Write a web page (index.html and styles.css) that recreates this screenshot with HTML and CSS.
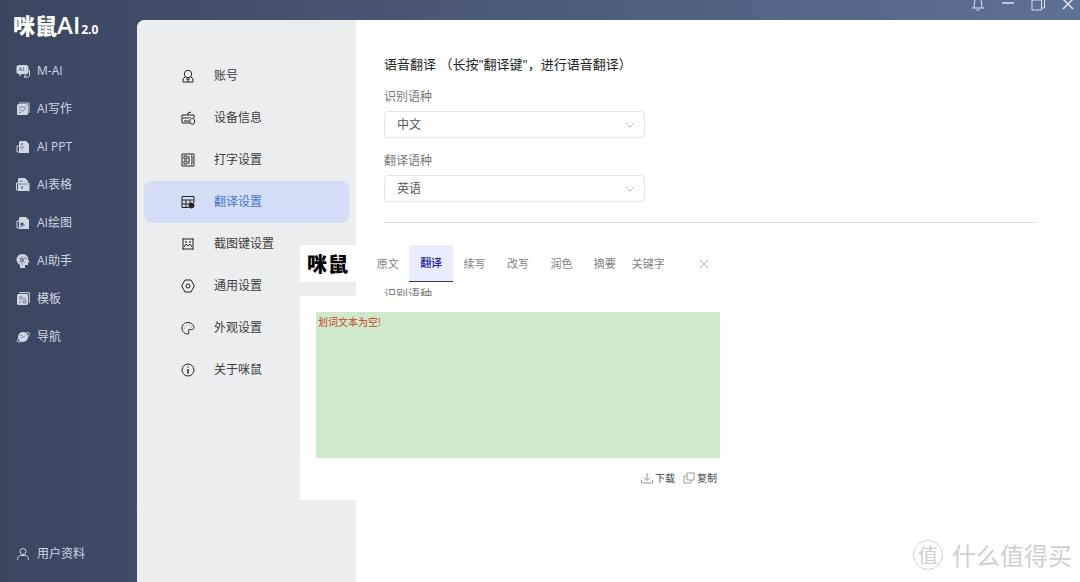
FILE: index.html
```html
<!DOCTYPE html>
<html lang="zh-CN">
<head>
<meta charset="utf-8">
<meta name="viewport" content="width=device-width, initial-scale=1">
<title>咪鼠AI 2.0</title>
<link rel="stylesheet" href="styles.css">
</head>
<body>
<div class="app">
  <aside class="sidebar">
    <h1 class="brand"><span class="brand-name">咪鼠</span><span class="brand-ai">AI</span><span class="brand-version">2.0</span></h1>
    <nav class="main-nav">
      <a class="nav-item" href="#"><svg class="nav-icon" viewBox="0 0 14 14"><path fill="currentColor" d="M3 1h7a2.500 2.500 0 0 1 2.500 2.500v4A2.500 2.500 0 0 1 10 10H6l-2.500 2.500V10H3A2.500 2.500 0 0 1 .5 7.500v-4A2.500 2.500 0 0 1 3 1z"/><path class="ink" d="M3 7l1.500-4L6 7M7.500 3v4M3.500 5.500h2"/><path class="line" d="M13.500 6v5.500a2 2 0 0 1-2 1.500H8l2-3"/></svg>M-AI</a>
      <a class="nav-item" href="#"><svg class="nav-icon" viewBox="0 0 14 14"><path class="line" d="M3 1h10v10"/><rect x="1" y="2" width="11" height="11" rx="1.500" fill="currentColor"/><path class="ink" d="M3 5h7M3 8h3M3 10.500h2M6 10l4-4"/></svg>AI写作</a>
      <a class="nav-item" href="#"><svg class="nav-icon" viewBox="0 0 14 14"><path fill="currentColor" d="M4 1h6l3 3v9H3V2z"/><path class="line" d="M3 6H1v6h2"/><path class="ink" d="M5 5l1-2 1 2M4 7h4M5 10l2-2"/></svg>AI PPT</a>
      <a class="nav-item" href="#"><svg class="nav-icon" viewBox="0 0 14 14"><path fill="currentColor" d="M3 0h6l3 3v2h1.500v8H2V1z"/><path class="line" d="M3 5H.5v7H3"/><path class="ink" d="M4 4l1-2 1 2M1 6h11M5 8l2 3m0-3l-2 3"/></svg>AI表格</a>
      <a class="nav-item" href="#"><svg class="nav-icon" viewBox="0 0 14 14"><path fill="currentColor" d="M4 1h6l3 3v9H3V2z"/><path class="line" d="M3 5H1v7h2"/><circle cx="6" cy="8" r="1.600" fill="#3c4860"/><path class="ink" d="M4 11l5-2"/></svg>AI绘图</a>
      <a class="nav-item" href="#"><svg class="nav-icon" viewBox="0 0 14 14"><path fill="currentColor" d="M6 0c4 0 6 2 6 5l1.500 3-1.500.5V11H9v3H4v-3C2 10 .5 8 .5 5.500S3 0 6 0z"/><path class="ink" d="M6 2v3L3 4M6 6L3 8M6 6l4-3M6 6l3 3M6 6v5M9 5h2"/><circle cx="6" cy="6" r="1.500" class="ink"/></svg>AI助手</a>
      <a class="nav-item" href="#"><svg class="nav-icon" viewBox="0 0 14 14"><path class="line" d="M3 .7h10.300V11"/><rect x="1" y="2" width="11" height="11" rx="1.500" fill="currentColor"/><path class="ink" d="M3 5h4M3 7h7M3 10h2M7 9h3v2H7z"/></svg>模板</a>
      <a class="nav-item" href="#"><svg class="nav-icon" viewBox="0 0 14 14"><circle cx="7" cy="7" r="5" fill="currentColor"/><path class="line" d="M10 3c3-1 4 0 3 2-1 3-7 7-10 7-3 0-2-2 0-4"/><path class="ink" d="M4 6l2-1M5 8l4-2"/></svg>导航</a>
    </nav>
    <a class="nav-item profile" href="#"><svg class="nav-icon" viewBox="0 0 14 14"><circle class="line" cx="7" cy="4.500" r="3"/><path class="line" d="M1.700 13v-1.500c0-1.800 1.300-3 3-3h4.600c1.700 0 3 1.200 3 3V13"/></svg>用户资料</a>
  </aside>

  <header class="titlebar">
    <button class="window-btn" aria-label="通知"><svg viewBox="0 0 14 14"><path d="M1 11h12M3 11l.5-6a3.500 3.500 0 0 1 7 0l.5 6M5.500 13h3"/></svg></button>
    <button class="window-btn" aria-label="最小化"><svg viewBox="0 0 14 14"><path class="thick" d="M1 6h12"/></svg></button>
    <button class="window-btn" aria-label="还原"><svg viewBox="0 0 14 14"><path d="M1 3h9.500v10H1zM4 3V1h9.500v10h-3"/></svg></button>
    <button class="window-btn" aria-label="关闭"><svg viewBox="0 0 14 14"><path class="thick" d="M2 2l10 10M12 2L2 12"/></svg></button>
  </header>

  <div class="workspace">
    <nav class="settings-nav">
      <a class="setting" href="#"><svg viewBox="0 0 14 14"><circle cx="7" cy="5" r="3.700"/><path d="M4 8l-2 2v3h10v-3l-2-2M7 10v3M5 10h4"/></svg>账号</a>
      <a class="setting" href="#"><svg viewBox="0 0 14 14"><path d="M9 12H1V4h12v3M7 4V2l3-1M3 6v2M5 6v2M7 6v2M9 6v1M3 10h5"/><path d="M9 9c0-2 4-2 4.500 0v2c0 3-4 3-4.500 0z"/></svg>设备信息</a>
      <a class="setting" href="#"><svg viewBox="0 0 14 14"><path d="M1 1h12v12H1zM3 3h3v3H3zM3 8h3v3H3zM8 3v8M10 3h1v8h-1"/></svg>打字设置</a>
      <a class="setting active" href="#" aria-current="page"><svg viewBox="0 0 14 14"><path d="M8 12.500H1v-11h12V8M1 5h12M1 9h8M5 5v7M9 5v4"/><circle cx="10.500" cy="10.500" r="2.500" fill="currentColor"/></svg>翻译设置</a>
      <a class="setting" href="#"><svg viewBox="0 0 14 14"><path d="M2 2h11M2 1v11M1 12h11M12 2v11M3 10l2-3 2 2 2-2 2 3"/><circle cx="5" cy="5" r=".5"/><circle cx="9" cy="5" r=".5"/></svg>截图键设置</a>
      <a class="setting" href="#"><svg viewBox="0 0 14 14"><path d="M4 1h6l3.300 6L10 13H4L.7 7z"/><circle cx="7" cy="7" r="2"/></svg>通用设置</a>
      <a class="setting" href="#"><svg viewBox="0 0 14 14"><path d="M7 13c-3.500 0-6-2.700-6-6s2.700-5.500 6-5.500S13 4 13 6.500c0 2-2 2.500-4 2-1.500-.3-2 .7-1.300 2 .6 1 .5 2.500-.7 2.500z"/><path d="M3.500 7h.5M5 4.500h.5M8.500 4H9M10.500 6h.5"/></svg>外观设置</a>
      <a class="setting" href="#"><svg viewBox="0 0 14 14"><circle cx="7" cy="7" r="6"/><path class="mark" d="M7 6v4.500M7 3.500v1"/></svg>关于咪鼠</a>
    </nav>

    <main class="content">
      <h2 class="section-title">语音翻译 （长按"翻译键"，进行语音翻译）</h2>
      <div class="field">
        <label for="source">识别语种</label>
        <div class="select-box"><select id="source"><option>中文</option></select><svg viewBox="0 0 10 6"><path d="M1 1l4 4 4-4"/></svg></div>
      </div>
      <div class="field">
        <label for="target">翻译语种</label>
        <div class="select-box"><select id="target"><option>英语</option></select><svg viewBox="0 0 10 6"><path d="M1 1l4 4 4-4"/></svg></div>
      </div>
      <hr class="divider">
      <p class="next-label">识别语种</p>
    </main>
  </div>

  <section class="popup" aria-label="划词工具">
    <div class="popup-bar">
      <span class="popup-logo"><span>咪</span><span>鼠</span></span>
      <div class="tabs">
        <button class="tab">原文</button>
        <button class="tab selected">翻译</button>
        <button class="tab">续写</button>
        <button class="tab">改写</button>
        <button class="tab">润色</button>
        <button class="tab">摘要</button>
        <button class="tab">关键字</button>
      </div>
      <button class="popup-close" aria-label="关闭"><svg viewBox="0 0 10 10"><path d="M1 1l8 8M9 1L1 9"/></svg></button>
    </div>
    <div class="popup-panel">
      <div class="result">划词文本为空!</div>
      <div class="actions">
        <button class="action"><svg viewBox="0 0 12 12"><path d="M6 1v7M3 5.500l3 3 3-3M.5 8v3h11V8"/></svg>下载</button>
        <button class="action"><svg viewBox="0 0 12 12"><path d="M4 1h7v7H4zM4 4H1v7h7V8"/></svg>复制</button>
      </div>
    </div>
  </section>

  <div class="watermark"><span class="seal">值</span><span>什么值得买</span></div>
</div>
</body>
</html>
```

FILE: styles.css
```css
* { box-sizing: border-box; }

body {
  margin: 0;
  font-family: "Open Sans", "Noto Sans CJK SC", sans-serif;
  font-size: 12px;
  line-height: 20px;
  color: #3c3c3c;
}

a { color: inherit; text-decoration: none; }

button {
  padding: 0;
  border: 0;
  background: none;
  font: inherit;
  color: inherit;
}

svg { fill: none; stroke: currentColor; stroke-width: 1; flex: none; }

.app {
  position: relative;
  display: grid;
  grid-template: 20px 1fr / 137px 1fr;
  min-height: 100vh;
  overflow: hidden;
  background: linear-gradient(90deg, #3a465e 0, #3f4c66 137px, #5f7096 100%);
}

.sidebar {
  grid-row: 1 / 3;
  display: flex;
  flex-direction: column;
  padding: 8px 0 18px;
  color: #d0d7e4;
}

.brand {
  display: flex;
  align-items: baseline;
  height: 32px;
  margin: 0 0 12px;
  padding-left: 13px;
  font-size: 22px;
  line-height: 32px;
  font-weight: 900;
  color: #fff;
}
.brand-name { font-family: "Noto Sans CJK SC", sans-serif; }
.brand-ai { font-family: "Open Sans", sans-serif; font-size: 24px; font-weight: 600; }
.brand-version { padding-left: 1px; font-family: "Open Sans", sans-serif; font-size: 12px; font-weight: 700; }

.nav-item {
  display: flex;
  align-items: center;
  gap: 7px;
  height: 38px;
  padding-left: 16px;
}
.nav-icon { width: 14px; height: 14px; stroke: none; }
.nav-icon .line { stroke: currentColor; }
.nav-icon .ink { stroke: #7c879c; fill: none; }
.profile { height: 20px; margin-top: auto; }

.titlebar {
  display: flex;
  justify-content: flex-end;
  gap: 16px;
  padding-right: 5px;
  color: #dce3f0;
}
.window-btn { width: 14px; height: 14px; margin-top: -3px; }
.window-btn svg { display: block; }
.window-btn .thick, .mark { stroke-width: 1.5; }

.workspace {
  display: flex;
  border-top-left-radius: 8px;
  overflow: hidden;
  background: #fff;
}

.settings-nav { flex: 0 0 219px; padding: 35px 7px; background: #ebedee; }
.setting {
  display: flex;
  align-items: center;
  gap: 19px;
  height: 42px;
  padding-left: 37px;
  border-radius: 8px;
}
.setting svg { width: 14px; height: 14px; color: #222; }
.setting.active { background: #d3ddf6; color: #4675d0; }

.content { flex: 1; padding: 34px 44px 0 28px; }
.section-title { margin: 0 0 13px; font-size: 13px; line-height: 20px; font-weight: 400; color: #222; }
.field { width: 261px; margin-bottom: 13px; color: #777; }
.field label { display: block; margin-bottom: 4px; }
.select-box { display: flex; align-items: center; }
.select-box select {
  flex: 1;
  height: 27px;
  padding: 0 12px;
  border: 1px solid #e3e4e7;
  border-radius: 4px;
  appearance: none;
  background: #fff;
  font: inherit;
  color: #555;
}
.select-box svg { width: 10px; height: 6px; margin-left: -20px; margin-right: 10px; color: #b5b8be; pointer-events: none; }
.divider { margin: 20px 0 0; border: 0; border-top: 1px solid #dcdcdc; }
.next-label { margin: 62px 0 0; color: #777; }

.popup { position: absolute; left: 300px; top: 245px; width: 437px; }
.popup-bar { display: flex; align-items: stretch; height: 37px; background: #fff; }
.popup-logo {
  display: flex;
  align-items: center;
  gap: 1px;
  flex: 0 0 66px;
  padding-left: 7px;
  font: 900 20px/37px "Noto Sans CJK SC", sans-serif;
  color: #000;
}
.tabs { display: grid; grid-template-columns: repeat(7, 1fr); width: 304px; }
.tab { font-size: 11px; color: #808080; }
.tab.selected { background: #e9edfd; border-bottom: 1px solid #33347a; color: #24249a; font-weight: 500; }
.popup-close { flex: 1; color: #b8b8b8; }
.popup-close svg { display: block; width: 10px; height: 10px; margin: 0 auto; }

.popup-panel { margin-top: 14px; padding: 16px 17px 12px 16px; background: #fff; }
.result { height: 146px; padding-left: 2px; background: #ceeacb; font-size: 10px; color: #c8402c; }
.actions { display: flex; justify-content: flex-end; gap: 8px; padding: 10px 3px 0 0; font-size: 10px; color: #36454b; }
.action { display: flex; align-items: center; gap: 2px; }
.action svg { width: 12px; height: 12px; color: #999; }

.watermark {
  position: absolute;
  right: 8px;
  bottom: 11px;
  display: flex;
  align-items: center;
  gap: 9px;
  font: 400 24px/32px "Noto Sans CJK SC", sans-serif;
  color: #cfcfcf;
}
.seal { width: 30px; height: 30px; border: 1px solid #d4d4d4; border-radius: 50%; font-size: 20px; line-height: 28px; text-align: center; }
```
